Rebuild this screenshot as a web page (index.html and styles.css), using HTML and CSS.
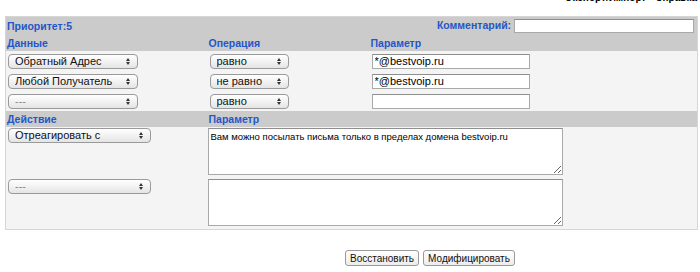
FILE: index.html
```html
<!DOCTYPE html>
<html lang="ru">
<head>
    <meta charset="UTF-8">
    <title>Правило</title>
    <link rel="stylesheet" href="styles.css">
</head>
<body>
    <div class="toplinks"><span class="dot">•</span> Экспорт/Импорт <span class="dot">•</span> Справка</div>
    <table class="rule">
        <colgroup>
            <col class="c1"><col class="c2"><col>
        </colgroup>
        <tr class="head">
            <th>Приоритет:5</th>
            <th colspan="2" class="right">Комментарий: <input type="text" class="comment"></th>
        </tr>
        <tr class="head">
            <th>Данные</th>
            <th>Операция</th>
            <th>Параметр</th>
        </tr>
        <tr class="row">
            <td><span class="sel w1"><select><option>Обратный Адрес</option></select></span></td>
            <td><span class="sel w2"><select><option>равно</option></select></span></td>
            <td><input type="text" class="param" value="*@bestvoip.ru"></td>
        </tr>
        <tr class="row">
            <td><span class="sel w1"><select><option>Любой Получатель</option></select></span></td>
            <td><span class="sel w2"><select><option>не равно</option></select></span></td>
            <td><input type="text" class="param" value="*@bestvoip.ru"></td>
        </tr>
        <tr class="row">
            <td><span class="sel w1"><select class="empty"><option>---</option></select></span></td>
            <td><span class="sel w2"><select><option>равно</option></select></span></td>
            <td><input type="text" class="param"></td>
        </tr>
        <tr class="head">
            <th>Действие</th>
            <th colspan="2">Параметр</th>
        </tr>
        <tr class="act">
            <td><span class="sel w3"><select><option>Отреагировать с</option></select></span></td>
            <td colspan="2"><textarea>Вам можно посылать письма только в пределах домена bestvoip.ru</textarea></td>
        </tr>
        <tr class="act">
            <td><span class="sel w3"><select class="empty"><option>---</option></select></span></td>
            <td colspan="2"><textarea></textarea></td>
        </tr>
    </table>
    <div class="buttons">
        <button>Восстановить</button>
        <button>Модифицировать</button>
    </div>
</body>
</html>
```

FILE: styles.css
```css
body{margin: 0;padding: 0 2px 0 5px;font-family: "Liberation Sans", Arial, sans-serif;font-size: 11px;background: #fff;color: #000;}
.toplinks{height: 24px;margin-top: -8px;text-align: right;padding-right: 1px;font-size: 10px;font-weight: bold;line-height: 12px;}
.toplinks .dot{color: #2a5bd0;}
.rule{width: 693px;border-collapse: collapse;table-layout: fixed;border: 1px solid #d6d6d6;background: #f4f4f4;}
.c1{width: 202px;}
.c2{width: 162px;}
.head th{background: #cbcbcb;color: #2456c8;font-size: 10.5px;font-weight: bold;text-align: left;padding: 0 0 0 1px;height: 16px;line-height: 12px;}
.head:first-child th{height: 18px;}
.head th.right{text-align: right;padding-right: 3px;}
.comment{width: 174px;height: 12px;border: 1px solid #a9a9a9;border-top-color: #8e8e8e;padding: 0 2px;margin: 0;vertical-align: middle;background: #fff;}
.row td{height: 20px;padding: 0 0 0 2px;vertical-align: middle;}
.act td{padding: 1px 0 0 2px;vertical-align: top;height: 49px;}
.act:last-child td{padding-top: 2px;height: 50px;}
.sel{position: relative;display: inline-block;}
.sel select{-webkit-appearance: none;appearance: none;height: 15px;border: 1px solid #9a9a9a;border-radius: 4px;background: linear-gradient(#ffffff, #f2f2f2 50%, #e4e4e4);font-family: "Liberation Sans", Arial, sans-serif;font-size: 11px;padding: 0 0 0 6px;margin: 0;line-height: 13px;width: 100%;color: #111;}
.sel select.empty{color: #888;}
.sel::before,.sel::after{content: "";position: absolute;right: 8px;width: 0;height: 0;border-left: 2px solid transparent;border-right: 2px solid transparent;}
.sel::before{top: 4px;border-bottom: 3px solid #333;}
.sel::after{top: 8px;border-top: 3px solid #333;}
.w1{width: 130px;}
.w2{width: 79px;}
.w3{width: 143px;}
.param{width: 152px;height: 13px;border: 1px solid #a9a9a9;border-top-color: #8e8e8e;padding: 0 2px;margin: 0;font-family: "Liberation Sans", Arial, sans-serif;font-size: 11px;background: #fff;}
textarea{width: 349px;height: 41px;border: 1px solid #a9a9a9;border-top-color: #8e8e8e;padding: 2px 2px;margin: 0 0 0 -2px;font-family: "Liberation Sans", Arial, sans-serif;font-size: 9.5px;background: #fff;resize: both;display: block;}
.buttons{padding: 20px 0 0 340px;}
.buttons button{font-family: "Liberation Sans", Arial, sans-serif;font-size: 10px;height: 16px;padding: 0 4px;margin: 0 1px 0 0;border: 1px solid #9a9a9a;border-radius: 3px;background: linear-gradient(#ffffff, #ececec);color: #111;}
```
